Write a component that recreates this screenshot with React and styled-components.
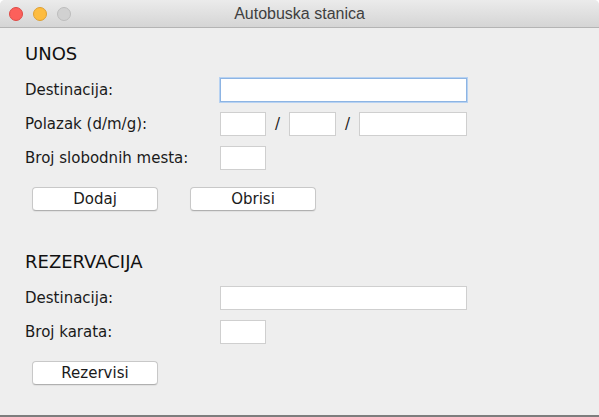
import React from "react";
import styled, { createGlobalStyle } from "styled-components";

const GlobalStyle = createGlobalStyle`
  html, body {
    margin: 0;
    padding: 0;
    background: #ffffff;
  }
  * {
    box-sizing: border-box;
  }
`;

const Window = styled.div`
  width: 599px;
  height: 417px;
  display: flex;
  flex-direction: column;
  background: #eeeeee;
  border-top-right-radius: 5px;
  border-top-left-radius: 5px;
  overflow: hidden;
  font-family: "DejaVu Sans", "Liberation Sans", sans-serif;
  color: #1a1a1a;
`;

const TitleBar = styled.div`
  height: 28px;
  flex-shrink: 0;
  display: flex;
  align-items: center;
  position: relative;
  background: linear-gradient(#ebebeb, #d5d5d5);
  border-bottom: 1px solid #b4b4b4;
`;

const Lights = styled.div`
  display: flex;
  gap: 10px;
  padding-left: 9px;
`;

const Light = styled.span`
  width: 14px;
  height: 14px;
  border-radius: 50%;
  background: ${(p) => p.color};
  border: 1px solid ${(p) => p.edge};
`;

const Title = styled.div`
  position: absolute;
  left: 0;
  right: 0;
  top: 0;
  text-align: center;
  line-height: 28px;
  font-family: "Liberation Sans", Arial, sans-serif;
  font-size: 16px;
  color: #3f3f3f;
  pointer-events: none;
`;

const Content = styled.div`
  flex: 1;
  padding: 15px 0 0 25px;
  border-bottom: 2px solid #7d7d7d;
`;

const Section = styled.section`
  margin-bottom: ${(p) => p.gap || 0}px;
`;

const Heading = styled.h2`
  margin: 0 0 13px;
  font-size: 18px;
  line-height: 22px;
  font-weight: normal;
  color: #111;
`;

const Form = styled.div`
  display: grid;
  grid-template-columns: 195px 1fr;
  row-gap: 10px;
  align-items: center;
`;

const Label = styled.label`
  font-size: 15px;
  line-height: 24px;
  color: #1a1a1a;
`;

const Fields = styled.div`
  display: flex;
  align-items: center;
`;

const Input = styled.input`
  width: ${(p) => p.w}px;
  height: 24px;
  padding: 0 4px;
  margin: 0;
  background: #ffffff;
  border: 1px solid ${(p) => (p.focused ? "#8db4e3" : "#cfcfcf")};
  box-shadow: ${(p) => (p.focused ? "0 0 0 1px #b7d2f2" : "none")};
  outline: none;
  font-family: inherit;
  font-size: 14px;
`;

const Slash = styled.span`
  width: ${(p) => p.w}px;
  text-align: center;
  font-size: 15px;
  color: #1a1a1a;
`;

const Buttons = styled.div`
  display: flex;
  gap: 32px;
  padding-left: 7px;
  margin-top: ${(p) => p.top}px;
`;

const Button = styled.button`
  width: 126px;
  height: 24px;
  margin: 0;
  padding: 0;
  background: #ffffff;
  border: 1px solid #c8c8c8;
  border-bottom-color: #b0b0b0;
  border-radius: 4px;
  box-shadow: 0 1px 1px rgba(0, 0, 0, 0.06);
  font-family: inherit;
  font-size: 15px;
  color: #1a1a1a;
`;

export default function App() {
  return (
    <>
      <GlobalStyle />
      <Window>
        <TitleBar>
          <Lights>
            <Light color="#fc605b" edge="#de4a45" />
            <Light color="#fdbc40" edge="#dea033" />
            <Light color="#d1d1d1" edge="#bdbdbd" />
          </Lights>
          <Title>Autobuska stanica</Title>
        </TitleBar>

        <Content>
          <Section gap={40}>
            <Heading>UNOS</Heading>
            <Form>
              <Label>Destinacija:</Label>
              <Fields>
                <Input w={247} focused />
              </Fields>

              <Label>Polazak (d/m/g):</Label>
              <Fields>
                <Input w={46} />
                <Slash w={23}>/</Slash>
                <Input w={47} />
                <Slash w={23}>/</Slash>
                <Input w={108} />
              </Fields>

              <Label>Broj slobodnih mesta:</Label>
              <Fields>
                <Input w={46} />
              </Fields>
            </Form>
            <Buttons top={17}>
              <Button>Dodaj</Button>
              <Button>Obrisi</Button>
            </Buttons>
          </Section>

          <Section>
            <Heading>REZERVACIJA</Heading>
            <Form>
              <Label>Destinacija:</Label>
              <Fields>
                <Input w={247} />
              </Fields>

              <Label>Broj karata:</Label>
              <Fields>
                <Input w={46} />
              </Fields>
            </Form>
            <Buttons top={17}>
              <Button>Rezervisi</Button>
            </Buttons>
          </Section>
        </Content>
      </Window>
    </>
  );
}
